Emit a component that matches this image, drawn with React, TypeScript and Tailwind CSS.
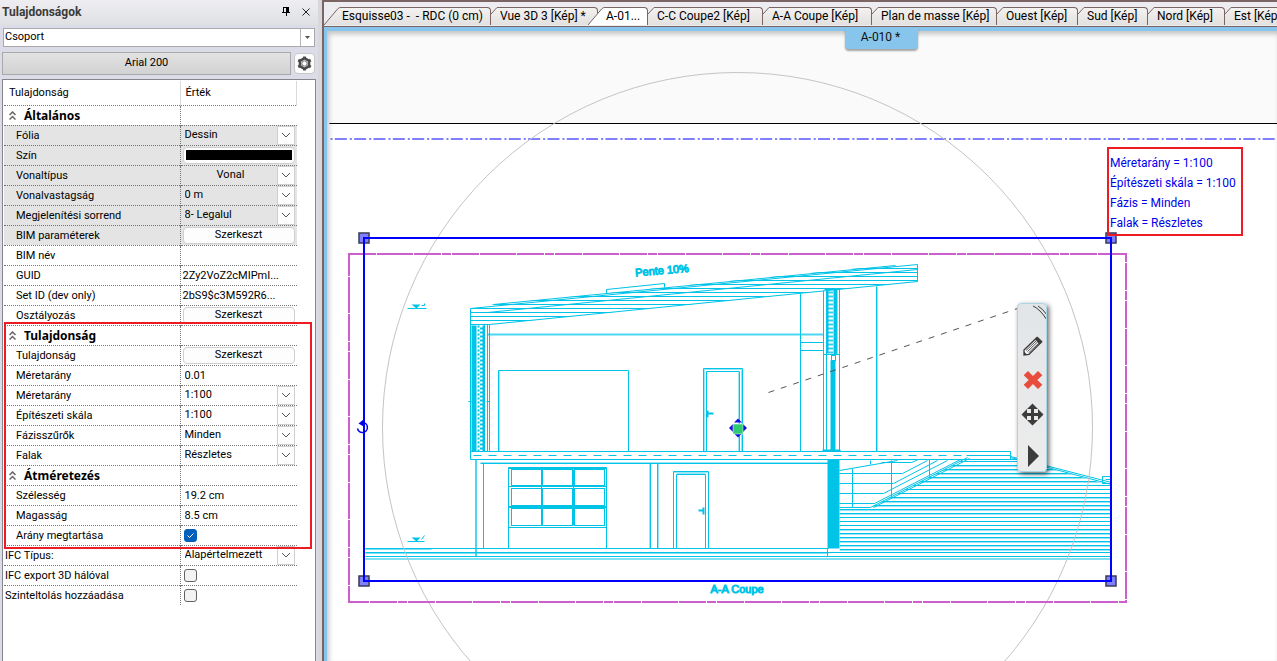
import { ReactNode } from "react";

type Kind = "section" | "select" | "color" | "button" | "static" | "text" | "check";

interface Row {
  id: string;
  label: string;
  kind: Kind;
  value?: string;
  shaded?: boolean;
  centered?: boolean;
  outer?: boolean;
  checked?: boolean;
}

const rows: Row[] = [
  { id: "general", label: "Általános", kind: "section" },
  { id: "layer", label: "Fólia", kind: "select", value: "Dessin", shaded: true },
  { id: "color", label: "Szín", kind: "color", shaded: true },
  { id: "linetype", label: "Vonaltípus", kind: "select", value: "Vonal", shaded: true, centered: true },
  { id: "lineweight", label: "Vonalvastagság", kind: "select", value: "0 m", shaded: true },
  { id: "order", label: "Megjelenítési sorrend", kind: "select", value: "8- Legalul", shaded: true },
  { id: "bim", label: "BIM paraméterek", kind: "button", value: "Szerkeszt", shaded: true },
  { id: "bimname", label: "BIM név", kind: "text", value: "" },
  { id: "guid", label: "GUID", kind: "static", value: "2Zy2VoZ2cMIPmI..." },
  { id: "setid", label: "Set ID (dev only)", kind: "static", value: "2bS9$c3M592R6..." },
  { id: "class", label: "Osztályozás", kind: "button", value: "Szerkeszt" },
  { id: "property", label: "Tulajdonság", kind: "section" },
  { id: "prop", label: "Tulajdonság", kind: "button", value: "Szerkeszt" },
  { id: "scalenum", label: "Méretarány", kind: "text", value: "0.01" },
  { id: "scale", label: "Méretarány", kind: "select", value: "1:100" },
  { id: "archscale", label: "Építészeti skála", kind: "select", value: "1:100" },
  { id: "phase", label: "Fázisszűrők", kind: "select", value: "Minden" },
  { id: "walls", label: "Falak", kind: "select", value: "Részletes" },
  { id: "resize", label: "Átméretezés", kind: "section" },
  { id: "width", label: "Szélesség", kind: "text", value: "19.2 cm" },
  { id: "height", label: "Magasság", kind: "text", value: "8.5 cm" },
  { id: "ratio", label: "Arány megtartása", kind: "check", checked: true },
  { id: "ifctype", label: "IFC Típus:", kind: "select", value: "Alapértelmezett", outer: true },
  { id: "ifcmesh", label: "IFC export 3D hálóval", kind: "check", outer: true },
  { id: "offset", label: "Szinteltolás hozzáadása", kind: "check", outer: true },
];

function ValueCell({ row }: { row: Row }) {
  switch (row.kind) {
    case "select":
      return (
        <div className="relative flex h-[19px]">
          <select
            id={row.id}
            defaultValue={row.value}
            className={
              "h-[18px] w-full appearance-none bg-transparent pl-1 leading-[18px] outline-none " +
              (row.centered ? "pr-5 text-center" : "pr-5")
            }
          >
            <option>{row.value}</option>
          </select>
          <span className="pointer-events-none absolute right-0.5 top-0 flex h-[19px] w-[18px] items-center justify-center border border-[#cfcfcf] bg-[#fdfdfd]">
            <svg width="10" height="6" viewBox="0 0 10 6" fill="none" stroke="#555">
              <path d="M1 1 L5 5 L9 1" />
            </svg>
          </span>
        </div>
      );
    case "color":
      return (
        <button
          id={row.id}
          className="ml-0.5 flex h-[17px] w-[112px] items-center justify-center rounded border border-[#d0d0d0] bg-white"
        >
          <span className="block h-2.5 w-[106px] bg-black" />
        </button>
      );
    case "button":
      return (
        <button
          id={row.id}
          className="ml-0.5 block h-[17px] w-[112px] rounded border border-[#d0d0d0] bg-[#fdfdfd] leading-[14px]"
        >
          {row.value}
        </button>
      );
    case "text":
      return (
        <input
          id={row.id}
          type="text"
          defaultValue={row.value}
          className="block h-[18px] w-full bg-transparent pl-1 outline-none"
        />
      );
    case "check":
      return (
        <span className="relative ml-[3px] block size-[13px]">
          <input
            id={row.id}
            type="checkbox"
            defaultChecked={row.checked}
            className="block size-[13px] appearance-none rounded-[3px] border border-[#626262] bg-[#f3f3f3] checked:border-[#005fb8] checked:bg-[#005fb8]"
          />
          {row.checked && (
            <svg className="pointer-events-none absolute inset-0" width="13" height="13" fill="none" stroke="#fff">
              <path d="M3.5 6.5 L5.5 8.5 L9.5 4.5" />
            </svg>
          )}
        </span>
      );
    case "static":
      return <span className="block pl-0.5 leading-[19px]">{row.value}</span>;
    default:
      return null;
  }
}

function PropertyPanel() {
  return (
    <aside className="flex w-[318px] shrink-0 flex-col bg-[#dcdce8]">
      <header className="flex h-[25px] shrink-0 items-center bg-linear-to-b from-[#eeeef2] to-[#dfe0e2] pb-0.5 pl-0.5 pr-[7px]">
        <h1 className="flex-1 font-['Roboto',sans-serif] text-[12px] font-bold leading-4 text-[#3a3a3a]">
          Tulajdonságok
        </h1>
        <button aria-label="Rögzítés" className="mr-2.5 flex size-2.5 items-center justify-center">
          <svg width="8" height="9" viewBox="0 0 8 9" shapeRendering="crispEdges">
            <path d="M1 0h6v5h1v1H5v3h-1V6H0V5h1z M2 1v4h2V1z" fill="#000" fillRule="evenodd" />
          </svg>
        </button>
        <button aria-label="Bezárás" className="flex size-2.5 items-center justify-center">
          <svg width="8" height="8" viewBox="0 0 8 8" stroke="#222" strokeWidth="1">
            <path d="M0.500 0.500 L7.500 7.500 M7.500 0.500 L0.500 7.500" />
          </svg>
        </button>
      </header>

      <div className="relative ml-[3px] mr-[3px] mt-[3px] flex shrink-0">
        <select
          aria-label="Típus"
          defaultValue="Csoport"
          className="h-[19px] w-full appearance-none border border-[#a9a9ac] bg-white pl-px outline-none"
        >
          <option>Csoport</option>
        </select>
        <span className="pointer-events-none absolute right-px top-px flex h-[17px] w-[14px] items-center justify-center border-l border-[#b5b5b8] bg-white">
          <svg width="5" height="3">
            <path d="M0 0h5L2.500 3z" fill="#555" />
          </svg>
        </span>
      </div>

      <div className="mt-[5px] flex shrink-0 items-center gap-[3px] pl-0.5 pr-[3px]">
        <button className="h-[23px] flex-1 border border-[#a9a9a9] bg-linear-to-b from-[#e2e2e2] to-[#d2d2d2] text-center">
          Arial 200
        </button>
        <button
          aria-label="Beállítások"
          className="flex h-[21px] w-[21px] items-center justify-center rounded border border-[#c8c8c8] bg-[#fcfcfc]"
        >
          <svg width="15" height="15" viewBox="0 0 15 15" fill="none" className="shrink-0">
            <path
              d="M7.500 2.200 L12 4.800 V10.200 L7.500 12.800 L3 10.200 V4.800 Z"
              stroke="#4a4a4a"
              strokeWidth="2.600"
              strokeLinejoin="round"
            />
            <path
              d="M7.500 0.500V3M7.500 12V14.500M1.300 4L3.400 5.200M13.700 4L11.600 5.200M1.300 11L3.400 9.800M13.700 11L11.600 9.800"
              stroke="#4a4a4a"
              strokeWidth="2.800"
            />
            <circle cx="7.500" cy="7.500" r="2.600" stroke="#777" strokeWidth="1" fill="#fff" />
          </svg>
        </button>
      </div>

      <div className="relative ml-0.5 mr-0.5 mt-1 flex-1 border-x border-t border-[#85858c] bg-white pl-px pt-px">
        <table className="w-[293px] table-fixed border-collapse text-left">
          <colgroup>
            <col className="w-[176px]" />
            <col />
          </colgroup>
          <thead>
            <tr className="h-6 border-b border-dotted border-[#777]">
              <th className="border-r border-[#d9d9d9] p-0 pl-[5px] pt-px font-normal">Tulajdonság</th>
              <th className="border-r border-[#d9d9d9] p-0 pl-[5px] pt-px font-normal">Érték</th>
            </tr>
          </thead>
          <tbody>
            {rows.map((row, i) => (
              <tr
                key={row.id}
                className={
                  "h-5 " +
                  (i < rows.length - 1 ? "border-b border-dotted border-[#777] " : "") +
                  (row.shaded ? "bg-[#e4e4e4]" : "")
                }
              >
                <th scope="row" className="border-r border-dotted border-[#777] p-0 font-normal">
                  {row.kind === "section" ? (
                    <span className="flex items-center pl-[5px] font-['Noto_Sans',sans-serif] text-[12px] font-bold leading-[19px]">
                      <svg width="7" height="9" className="mr-2" fill="none" stroke="#666" strokeWidth="1.500">
                        <path d="M0.500 4 L3.500 1 L6.500 4 M0.500 8.500 L3.500 5.500 L6.500 8.500" />
                      </svg>
                      {row.label}
                    </span>
                  ) : (
                    <label
                      htmlFor={row.kind === "static" ? undefined : row.id}
                      className={"block leading-[19px] " + (row.outer ? "pl-px" : "pl-3")}
                    >
                      {row.label}
                    </label>
                  )}
                </th>
                <td className="p-0">
                  <ValueCell row={row} />
                </td>
              </tr>
            ))}
          </tbody>
        </table>
        <div className="pointer-events-none absolute left-px top-[242px] h-[227px] w-[308px] border-2 border-[#ed1c24]" />
      </div>
    </aside>
  );
}

const tabs: { label: string; width: string; shape: "first" | "active" | "plain" }[] = [
  { label: "Esquisse03 -  - RDC (0 cm)", width: "w-[150px]", shape: "first" },
  { label: "Vue 3D 3 [Kép] *", width: "w-[99px]", shape: "plain" },
  { label: "A-01...", width: "w-[43px]", shape: "active" },
  { label: "C-C Coupe2 [Kép]", width: "w-[107px]", shape: "plain" },
  { label: "A-A Coupe [Kép]", width: "w-[101px]", shape: "plain" },
  { label: "Plan de masse [Kép]", width: "w-[117px]", shape: "plain" },
  { label: "Ouest [Kép]", width: "w-[73px]", shape: "plain" },
  { label: "Sud [Kép]", width: "w-[62px]", shape: "plain" },
  { label: "Nord [Kép]", width: "w-[69px]", shape: "plain" },
  { label: "Est [Kép]", width: "w-[62px]", shape: "plain" },
];

function TabBar() {
  return (
    <nav className="flex h-[25px] shrink-0 overflow-hidden border-b border-[#7a6464] bg-[#ececf1] pt-[5px] font-['Roboto',sans-serif] text-[12px]">
      {tabs.map((tab) => {
        const active = tab.shape === "active";
        const plain = tab.shape === "plain";
        return (
          <button
            key={tab.label}
            className={"relative flex h-5 shrink-0 " + (active ? "-ml-2.5 z-10" : "")}
          >
            <svg width={plain ? 8 : 17} height="18" className="shrink-0">
              <defs>
                <linearGradient id="tabfill" x1="0" x2="0" y1="0" y2="1">
                  <stop offset="0" stopColor="#f4f2f1" />
                  <stop offset="1" stopColor="#e3e1e0" />
                </linearGradient>
              </defs>
              <path
                d={plain ? "M0 18V7L7 0H8V18Z" : "M0 18L14 1L17 0V18Z"}
                fill={active ? "#fff" : "url(#tabfill)"}
              />
              <path
                d={plain ? "M0 7L6 0.500H8" : "M0 18L14 1.500Q15 0.500 17 0.500"}
                fill="none"
                stroke="#7a6464"
              />
            </svg>
            <span
              className={
                "block h-[18px] whitespace-pre rounded-tr-sm border-r border-t border-[#7a6464] pl-px text-left leading-[17px] " +
                tab.width +
                (active ? " bg-white" : " bg-linear-to-b from-[#f4f2f1] to-[#e3e1e0]")
              }
            >
              {tab.label}
            </span>
          </button>
        );
      })}
    </nav>
  );
}

const range = (from: number, to: number, step: number) =>
  Array.from({ length: Math.floor((to - from) / step) + 1 }, (_, i) => from + i * step);

const panes = [511, 542, 574].flatMap((x) => [
  { x, y: 469, h: 16 },
  { x, y: 488, h: 17 },
  { x, y: 508, h: 17 },
]);

function Section() {
  return (
    <g fill="none" stroke="#00c3e8" strokeWidth="1">
      <defs>
        <clipPath id="roof">
          <path d="M470 308L493 304L895 264L917 263V281L489 324H470Z" />
        </clipPath>
        <clipPath id="stairs">
          <path d="M839 507H870L967 457H1010L1111 485V559H839Z" />
        </clipPath>
      </defs>

      <path d="M489 324H470V308L917 264V281L489 324M493 304L895 265M487 312L917 269M493 304H505" />
      <g clipPath="url(#roof)">
        {range(268, 320, 4).map((y) => (
          <path key={y} d={`M470 ${y}H917`} />
        ))}
      </g>
      <path d="M606 293V289L664 283V287" />

      <path d="M470 324V451M484 324V451M487 324V451M489 324V451M470 324H489" />
      <rect x="471" y="325" width="5" height="126" fill="#00c3e8" stroke="none" />
      <path d="M478 325V451" strokeWidth="2" strokeDasharray="2 2" />
      <path d="M481 327V451" strokeWidth="3" strokeDasharray="2 2" />
      <path d="M483 325V451" strokeWidth="2" />
      <path d="M468 401H471M486 401H489" />
      <path d="M487 334H823" strokeWidth="2" opacity="0.7" />
      <path d="M498 451V370H628V451" />
      <path d="M800 293V451M876 286V451M800 342H823M800 350H823" />
      <path d="M823 290V451M826 290V451M839 288V451M823 354H839M824 289H839" />
      <rect x="833" y="289" width="4" height="65" fill="#00c3e8" stroke="none" />
      <path d="M827 290V353" strokeWidth="2" />
      <path d="M830 291V353" strokeWidth="5" strokeDasharray="2 2" opacity="0.8" />
      <rect x="831" y="355" width="4" height="5" />
      <rect x="830" y="360" width="5" height="91" fill="#00c3e8" stroke="none" />
      <path d="M822 450H840" strokeWidth="2" />

      <path d="M703 451V368H742V451M706 451V371H739V451" />
      <path d="M499 451V371M704 451V369H741V451M738 451V372M877 286V451" opacity="0.4" />
      <path d="M706 413H713M707 410V417" strokeWidth="2" />

      <path d="M470 451H1010V459M470 451V459H1017M966 455H1010" />
      <path d="M473 455H966" strokeDasharray="8 7" />
      <path d="M475 459V556M476 459V556" opacity="0.7" />
      <path d="M483 463V548M480 463H828M650 463V548M657 463V548" />
      <path d="M480 462H828M649 463V548M658 463V548" opacity="0.4" />

      <path d="M508 548V467H606V548M508 527H606M508 486H606M508 506H606" />
      {panes.map((p) => (
        <rect key={`${p.x}-${p.y}`} x={p.x} y={p.y} width="30" height={p.h} />
      ))}
      <path d="M541 469V525M573 469V525M508 507H606M508 468H606" />

      <path d="M673 548V471H708V548M676 548V474H705V548" />
      <path d="M673 472H708M676 473H705" opacity="0.4" />
      <path d="M698 510H704M703 507V514" strokeWidth="2" />

      <path d="M365 548H828M365 552H1110M365 556H1110" />
      <path d="M365 553H828M365 558H1110M365 549H431M365 559H1110" opacity="0.5" />
      <rect x="827" y="459" width="12" height="89" fill="#00c3e8" stroke="none" />
      <path d="M827 548V556" />

      <g clipPath="url(#stairs)">
        {range(461, 549, 4).map((y) => (
          <path key={y} d={`M839 ${y}H1111`} />
        ))}
        {[...range(466, 482, 4), ...range(498, 514, 4), ...range(530, 550, 4)].map((y) => (
          <path key={y} d={`M839 ${y}H1111`} opacity="0.4" />
        ))}
      </g>
      <path d="M839 507H870L967 457M873 507L969 458" />
      <path d="M839 470L897 460M870 460V464M852 468V507M891 460V496M929 459V476" />
      <path d="M839 473H902L927 460M839 483H893L937 460M839 493H883L947 460M839 503H874L960 459M881 462H911L918 459" />
      <path d="M1010 456L1111 482M1010 457L1111 484" />
      <path d="M1111 476H1102V483H1111M1105 479H1111" />

      <path d="M407 308H426M424 303V305H421" />
      <path d="M411 304H420L416 308Z" fill="#00c3e8" stroke="none" />
      <path d="M407 541H424M421 539L424 535" />
      <path d="M411 537H420L416 541Z" fill="#00c3e8" stroke="none" />
    </g>
  );
}

function Handle({ x, y }: { x: number; y: number }) {
  return <rect x={x - 5} y={y - 5} width="10" height="10" fill="#7f7fff" stroke="#3a3a55" strokeWidth="1.500" />;
}

function Drawing() {
  return (
    <svg className="absolute inset-0 size-full" role="img" aria-label="A-A Coupe">
      <rect width="100%" height="92" fill="#fafafa" />
      <g transform="translate(-326.5 -30.5)">
        <path d="M329 123H4000" stroke="#000" />
        <path d="M329 138.500H4000" stroke="#8080ff" strokeWidth="2" strokeDasharray="12 3 2 2.330" strokeDashoffset="14" />
        <Section />
        <circle cx="737" cy="427" r="355" fill="none" stroke="#c4c4c4" />
        <rect x="348.500" y="253.500" width="777" height="348" fill="none" stroke="#cc5fcc" strokeWidth="2" strokeDasharray="27 1 36 1 27 1 9 1" />
        <Handle x={363.5} y={237.5} />
        <Handle x={1110.5} y={237.5} />
        <Handle x={363.5} y={580.5} />
        <Handle x={1110.5} y={580.5} />
        <rect x="363.500" y="237.500" width="747" height="343" fill="none" stroke="#0000ff" strokeWidth="2" />
        <path d="M357 428A5 5 0 1 0 362 422" fill="none" stroke="#0000e8" strokeWidth="1.500" />
        <path d="M358 423L363 419V426Z" fill="#0000e8" />
        <path d="M768 392L1017 308" stroke="#555" strokeDasharray="6 7" />
        <g fill="#1010e0">
          <path d="M737.500 418L741.500 422H733.500ZM737.500 437L741.500 433H733.500ZM728.500 427.500L732.500 423.500V431.500ZM746.500 427.500L742.500 423.500V431.500Z" />
        </g>
        <rect x="732.500" y="423.500" width="10" height="10" fill="#2ecc71" stroke="#fff" strokeWidth="0.500" />
        <g fill="#00c3e8" stroke="#00c3e8" strokeWidth="1" className="font-['Liberation_Sans',sans-serif] text-[11px]">
          <text x="635" y="276" transform="rotate(-5 635 276)">Pente 10%</text>
          <text x="710" y="592">A-A Coupe</text>
        </g>
      </g>
    </svg>
  );
}

function ToolButton({ label, children }: { label: string; children: ReactNode }) {
  return (
    <button aria-label={label} className="flex h-[34px] w-full items-center justify-center">
      {children}
    </button>
  );
}

function FloatingToolbar() {
  return (
    <div
      role="toolbar"
      className="absolute left-[690px] top-[272px] flex w-[30px] flex-col rounded border border-[#a9d6e6] bg-linear-to-b from-[#e2e5e8] to-[#ececec] shadow-[2px_2px_5px_rgba(0,0,0,0.6)]"
    >
      <svg width="28" height="25" className="shrink-0" fill="none" stroke="#3a3a3a">
        <path d="M15 2Q22 5 29 16M20 2Q25 5 29 11" />
      </svg>
      <ToolButton label="Szerkesztés">
        <svg width="20" height="20" viewBox="0 0 20 20" className="ml-px">
          <path d="M1 14L14 1.500L18.500 6L6 18.500L1 19Z" fill="#f4f4f4" stroke="#3c3c3c" strokeWidth="1.300" />
          <path d="M12 3.500L14.500 0.800L19.500 5.500L16.500 8.500Z" fill="#3c3c3c" />
          <path d="M3 14.500L13.500 4.500M5.500 17L16 7M4.500 15.500L14.500 6" stroke="#555" />
          <path d="M1 15.500V19H4.500Z" fill="#3c3c3c" />
        </svg>
      </ToolButton>
      <ToolButton label="Törlés">
        <svg width="20" height="20" viewBox="0 0 20 20" className="ml-px">
          <path d="M5 1L10 6L15 1L19.300 5.300L14.300 10L19.300 14.700L15 19L10 14L5 19L0.700 14.700L5.700 10L0.700 5.300Z" fill="#e74c3c" />
        </svg>
      </ToolButton>
      <ToolButton label="Mozgatás">
        <svg width="23" height="23" viewBox="0 0 23 23">
          <path
            d="M11.500 0.500L17 6H13V10H17V6L22.500 11.500L17 17V13H13V17H17L11.500 22.500L6 17H10V13H6V17L0.500 11.500L6 6V10H10V6H6Z"
            fill="#3c3c3c"
          />
        </svg>
      </ToolButton>
      <button aria-label="Tovább" className="mt-2.5 flex h-[30px] w-full items-center justify-center">
        <svg width="12" height="22" className="ml-0.5">
          <path d="M1 0L12 11L1 22Z" fill="#3c3c3c" />
        </svg>
      </button>
    </div>
  );
}

function Canvas() {
  return (
    <main className="relative min-h-0 flex-1 overflow-hidden bg-white">
      <Drawing />
      <div className="pointer-events-none absolute inset-0 shadow-[inset_2px_3px_5px_rgba(0,0,0,0.22)]" />
      <div className="absolute left-[780px] top-[116px] w-[136px] border-2 border-[#ed1c24] pb-px pl-px pt-1 font-['Roboto',sans-serif] text-[12px] leading-5 text-[#0000ee]">
        <p>Méretarány = 1:100</p>
        <p>Építészeti skála = 1:100</p>
        <p>Fázis = Minden</p>
        <p>Falak = Részletes</p>
      </div>
      <FloatingToolbar />
    </main>
  );
}

export default function App() {
  return (
    <div className="flex h-screen overflow-hidden bg-[#d8d8dc] font-['Roboto',sans-serif] text-[11px] text-black">
      <PropertyPanel />
      <div className="ml-1 flex min-w-0 flex-1 flex-col border-l-2 border-t-2 border-[#7a6464] bg-[#e9e4e6]">
        <TabBar />
        <div className="relative flex min-h-0 flex-1 flex-col border-l-[3px] border-t-4 border-[#88c5ec]">
          <Canvas />
          <div className="absolute -top-[3px] left-[518px] h-[21px] w-[73px] rounded-b bg-[#88c5ec] pr-0.5 text-center font-['Roboto',sans-serif] text-[12px] leading-[18px] text-[#111] shadow-[0_2px_2px_rgba(0,0,0,0.35)]">
            A-010 *
          </div>
        </div>
      </div>
    </div>
  );
}
